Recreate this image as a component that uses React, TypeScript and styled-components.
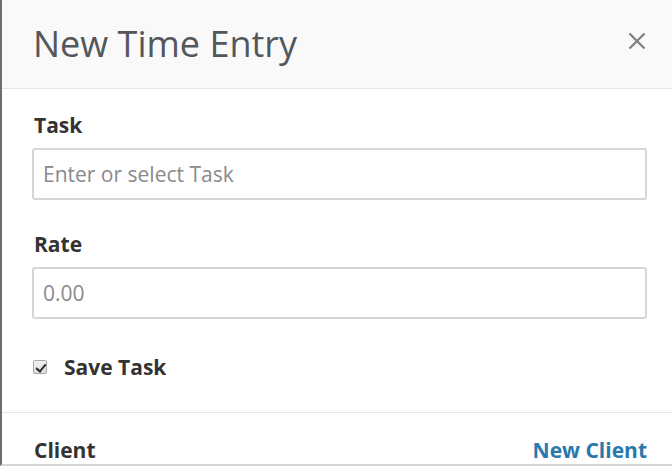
import React from "react";
import styled, { createGlobalStyle } from "styled-components";

const Global = createGlobalStyle`
  html, body { margin: 0; padding: 0; background: #ffffff; }
  body { font-family: "Open Sans", "Liberation Sans", Arial, sans-serif; }
  * { box-sizing: border-box; }
`;

const Frame = styled.div`
  width: 672px;
  height: 466px;
  overflow: hidden;
  border-left: 2px solid #6e6e6e;
  border-bottom: 2px solid #d6d6d6;
  background: #ffffff;
  display: flex;
  flex-direction: column;
`;

const Header = styled.div`
  height: 89px;
  flex: none;
  background: #f9f9f9;
  border-bottom: 1px solid #e5e5e5;
  display: flex;
  align-items: center;
  justify-content: space-between;
  padding: 0 24px 0 31px;
`;

const Title = styled.h2`
  margin: 0 0 2px 0;
  font-size: 36px;
  font-weight: 400;
  color: #53575b;
`;

const CloseButton = styled.button`
  border: none;
  background: transparent;
  padding: 0;
  margin: 0 0 6px 0;
  width: 22px;
  height: 22px;
  display: flex;
  align-items: center;
  justify-content: center;
  cursor: pointer;
`;

const Section = styled.div<{ $pt: number; $pb: number }>`
  padding: ${(p) => p.$pt}px 25px ${(p) => p.$pb}px 30px;
  display: flex;
  flex-direction: column;
`;

const Divider = styled.div`
  height: 1px;
  background: #e5e5e5;
  flex: none;
`;

const Label = styled.label<{ $mt?: number; $mb?: number }>`
  display: block;
  margin-top: ${(p) => p.$mt ?? 0}px;
  margin-bottom: ${(p) => p.$mb ?? 9}px;
  padding-left: 2px;
  font-size: 21px;
  line-height: 28px;
  font-weight: 700;
  color: #333333;
`;

const Input = styled.input`
  display: block;
  width: 100%;
  height: 52px;
  border: 2px solid #d6d6d6;
  border-radius: 3px;
  padding: 0 9px;
  font-family: "Open Sans", "Liberation Sans", Arial, sans-serif;
  font-size: 21px;
  color: #333;
  background: #fff;
  outline: none;
  &::placeholder { color: #8a8a8a; }
`;

const CheckRow = styled.label`
  display: flex;
  align-items: center;
  gap: 17px;
  margin-top: 34px;
  padding-left: 1px;
  font-size: 21px;
  line-height: 28px;
  font-weight: 700;
  color: #333;
`;

const Checkbox = styled.input`
  appearance: none;
  -webkit-appearance: none;
  margin: 0;
  width: 14px;
  height: 14px;
  border: 1px solid #a9a9a9;
  border-radius: 2px;
  background: linear-gradient(#f2f2f2, #dcdcdc);
  position: relative;
  &:checked::after {
    content: "";
    position: absolute;
    left: 3.5px;
    top: 0.5px;
    width: 4px;
    height: 8px;
    border: solid #2e2e2e;
    border-width: 0 2.5px 2.5px 0;
    transform: rotate(40deg);
  }
`;

const Row = styled.div`
  display: flex;
  justify-content: space-between;
  align-items: center;
`;

const LinkText = styled.a`
  font-size: 21px;
  line-height: 28px;
  font-weight: 700;
  color: #2a78ad;
  text-decoration: none;
`;

export default function App() {
  return (
    <>
      <Global />
      <Frame>
        <Header>
          <Title>New Time Entry</Title>
          <CloseButton aria-label="Close">
            <svg width="18" height="18" viewBox="0 0 18 18">
              <path d="M1.5 1.5 L16.5 16.5 M16.5 1.5 L1.5 16.5" stroke="#7d7f7f" strokeWidth="2.2" strokeLinecap="butt" />
            </svg>
          </CloseButton>
        </Header>
        <Section $pt={22} $pb={31}>
          <Label>Task</Label>
          <Input placeholder="Enter or select Task" />
          <Label $mt={30}>Rate</Label>
          <Input placeholder="0.00" />
          <CheckRow>
            <Checkbox type="checkbox" defaultChecked />
            Save Task
          </CheckRow>
        </Section>
        <Divider />
        <Section $pt={23} $pb={0}>
          <Row>
            <Label as="span" $mb={0}>Client</Label>
            <LinkText href="#">New Client</LinkText>
          </Row>
        </Section>
      </Frame>
    </>
  );
}
